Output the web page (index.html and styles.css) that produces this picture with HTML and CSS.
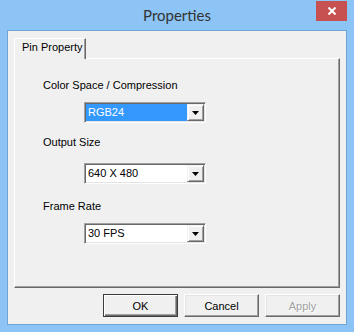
FILE: index.html
```html
<!DOCTYPE html>
<html lang="en">
<head>
    <meta charset="UTF-8">
    <title>Properties</title>
    <link rel="stylesheet" href="styles.css">
</head>
<body>
    <div class="window">
        <div class="titlebar">
            <span></span>
            <div class="title">Properties</div>
            <div class="close">
                <svg width="8" height="8" viewBox="0 0 8 8"><path d="M0.5 0.5 L7.5 7.5 M7.5 0.5 L0.5 7.5" stroke="#fff" stroke-width="2"/></svg>
            </div>
        </div>

        <div class="client">
            <div class="tabs">
                <div class="tab">Pin Property</div>
            </div>

            <div class="panel">
                <div class="field">
                    <div class="label">Color Space / Compression</div>
                    <div class="combo gap-10">
                        <div class="combo-value selected">RGB24</div>
                        <div class="combo-btn"><svg width="7" height="4" viewBox="0 0 7 4"><polygon points="0,0 7,0 3.5,4" fill="#000"/></svg></div>
                    </div>
                </div>
                <div class="field field-2">
                    <div class="label">Output Size</div>
                    <div class="combo gap-14">
                        <div class="combo-value">640 X 480</div>
                        <div class="combo-btn"><svg width="7" height="4" viewBox="0 0 7 4"><polygon points="0,0 7,0 3.5,4" fill="#000"/></svg></div>
                    </div>
                </div>
                <div class="field field-3">
                    <div class="label">Frame Rate</div>
                    <div class="combo gap-10">
                        <div class="combo-value">30 FPS</div>
                        <div class="combo-btn"><svg width="7" height="4" viewBox="0 0 7 4"><polygon points="0,0 7,0 3.5,4" fill="#000"/></svg></div>
                    </div>
                </div>
            </div>

            <div class="buttons">
                <button class="btn btn-default">OK</button>
                <button class="btn">Cancel</button>
                <button class="btn" disabled>Apply</button>
            </div>
        </div>
    </div>
</body>
</html>
```

FILE: styles.css
```css
body {
    margin: 0;
    font-family: "Liberation Sans", Arial, sans-serif;
    font-size: 11px;
    color: #000;
}

.window {
    width: 354px;
    height: 332px;
    background: #8bc4f5;
    display: flex;
    flex-direction: column;
}

/* Barra de titulo */
.titlebar {
    height: 30px;
    flex-shrink: 0;
    display: grid;
    grid-template-columns: 1fr auto 1fr;
    align-items: start;
}

.title {
    font-family: Lato, "Noto Sans", sans-serif;
    font-size: 15px;
    color: #333;
    line-height: 20px;
    padding-top: 5px;
}

.close {
    justify-self: end;
    margin: 1px 7px 0 0;
    width: 31px;
    height: 20px;
    background: #c75050;
    display: flex;
    align-items: center;
    justify-content: center;
}

/* Area cliente */
.client {
    flex: 1;
    margin: 0 7px 7px 7px;
    border: 1px solid #6fa5d6;
    background: #f0f0f0;
    padding: 7px 6px 7px 6px;
    display: flex;
    flex-direction: column;
}

.tabs {
    display: flex;
    height: 20px;
    position: relative;
    z-index: 1;
}

.tab {
    width: 72px;
    height: 21px;
    box-sizing: border-box;
    background: #f0f0f0;
    border-top: 1px solid #fff;
    border-left: 1px solid #fff;
    border-right: 1px solid #696969;
    box-shadow: inset -1px 0 #a0a0a0;
    padding: 2px 0 0 7px;
    line-height: 13px;
}

.panel {
    height: 230px;
    box-sizing: border-box;
    border: 1px solid;
    border-color: #fff #696969 #696969 #fff;
    box-shadow: inset -1px -1px #a0a0a0;
    padding: 20px 0 0 28px;
    display: flex;
    flex-direction: column;
}

.field {
    display: flex;
    flex-direction: column;
}

.field-2 { margin-top: 13px; }
.field-3 { margin-top: 16px; }

.label {
    line-height: 13px;
}

.combo {
    margin-left: 41px;
    width: 122px;
    height: 21px;
    box-sizing: border-box;
    border: 1px solid;
    border-color: #a0a0a0 #fff #fff #a0a0a0;
    box-shadow: inset 1px 1px #696969, inset -1px -1px #e3e3e3;
    padding: 1px;
    background: #fff;
    display: flex;
}

.gap-10 { margin-top: 10px; }
.gap-14 { margin-top: 14px; }

.combo-value {
    flex: 1;
    line-height: 17px;
    padding-left: 2px;
}

.combo-value.selected {
    background: #3399ff;
    color: #fff;
}

.combo-btn {
    width: 17px;
    height: 17px;
    box-sizing: border-box;
    background: #f0f0f0;
    border: 1px solid;
    border-color: #f0f0f0 #696969 #696969 #f0f0f0;
    box-shadow: inset 1px 1px #fff, inset -1px -1px #a0a0a0;
    display: flex;
    align-items: center;
    justify-content: center;
    padding-top: 1px;
}

/* Botones */
.buttons {
    margin-top: 6px;
    display: flex;
    justify-content: flex-end;
    gap: 6px;
}

.btn {
    width: 75px;
    height: 23px;
    box-sizing: border-box;
    margin: 0;
    padding: 0;
    font-family: "Liberation Sans", Arial, sans-serif;
    font-size: 11px;
    color: #000;
    background: #f0f0f0;
    border: 1px solid;
    border-color: #fff #696969 #696969 #fff;
    box-shadow: inset -1px -1px #a0a0a0, inset 1px 1px #e3e3e3;
}

.btn-default {
    border-color: #3c3c3c;
    box-shadow: inset 1px 1px #fff, inset -1px -1px #696969, inset -2px -2px #a0a0a0;
}

.btn:disabled {
    color: #a0a0a0;
    text-shadow: 1px 1px #fff;
}
```
